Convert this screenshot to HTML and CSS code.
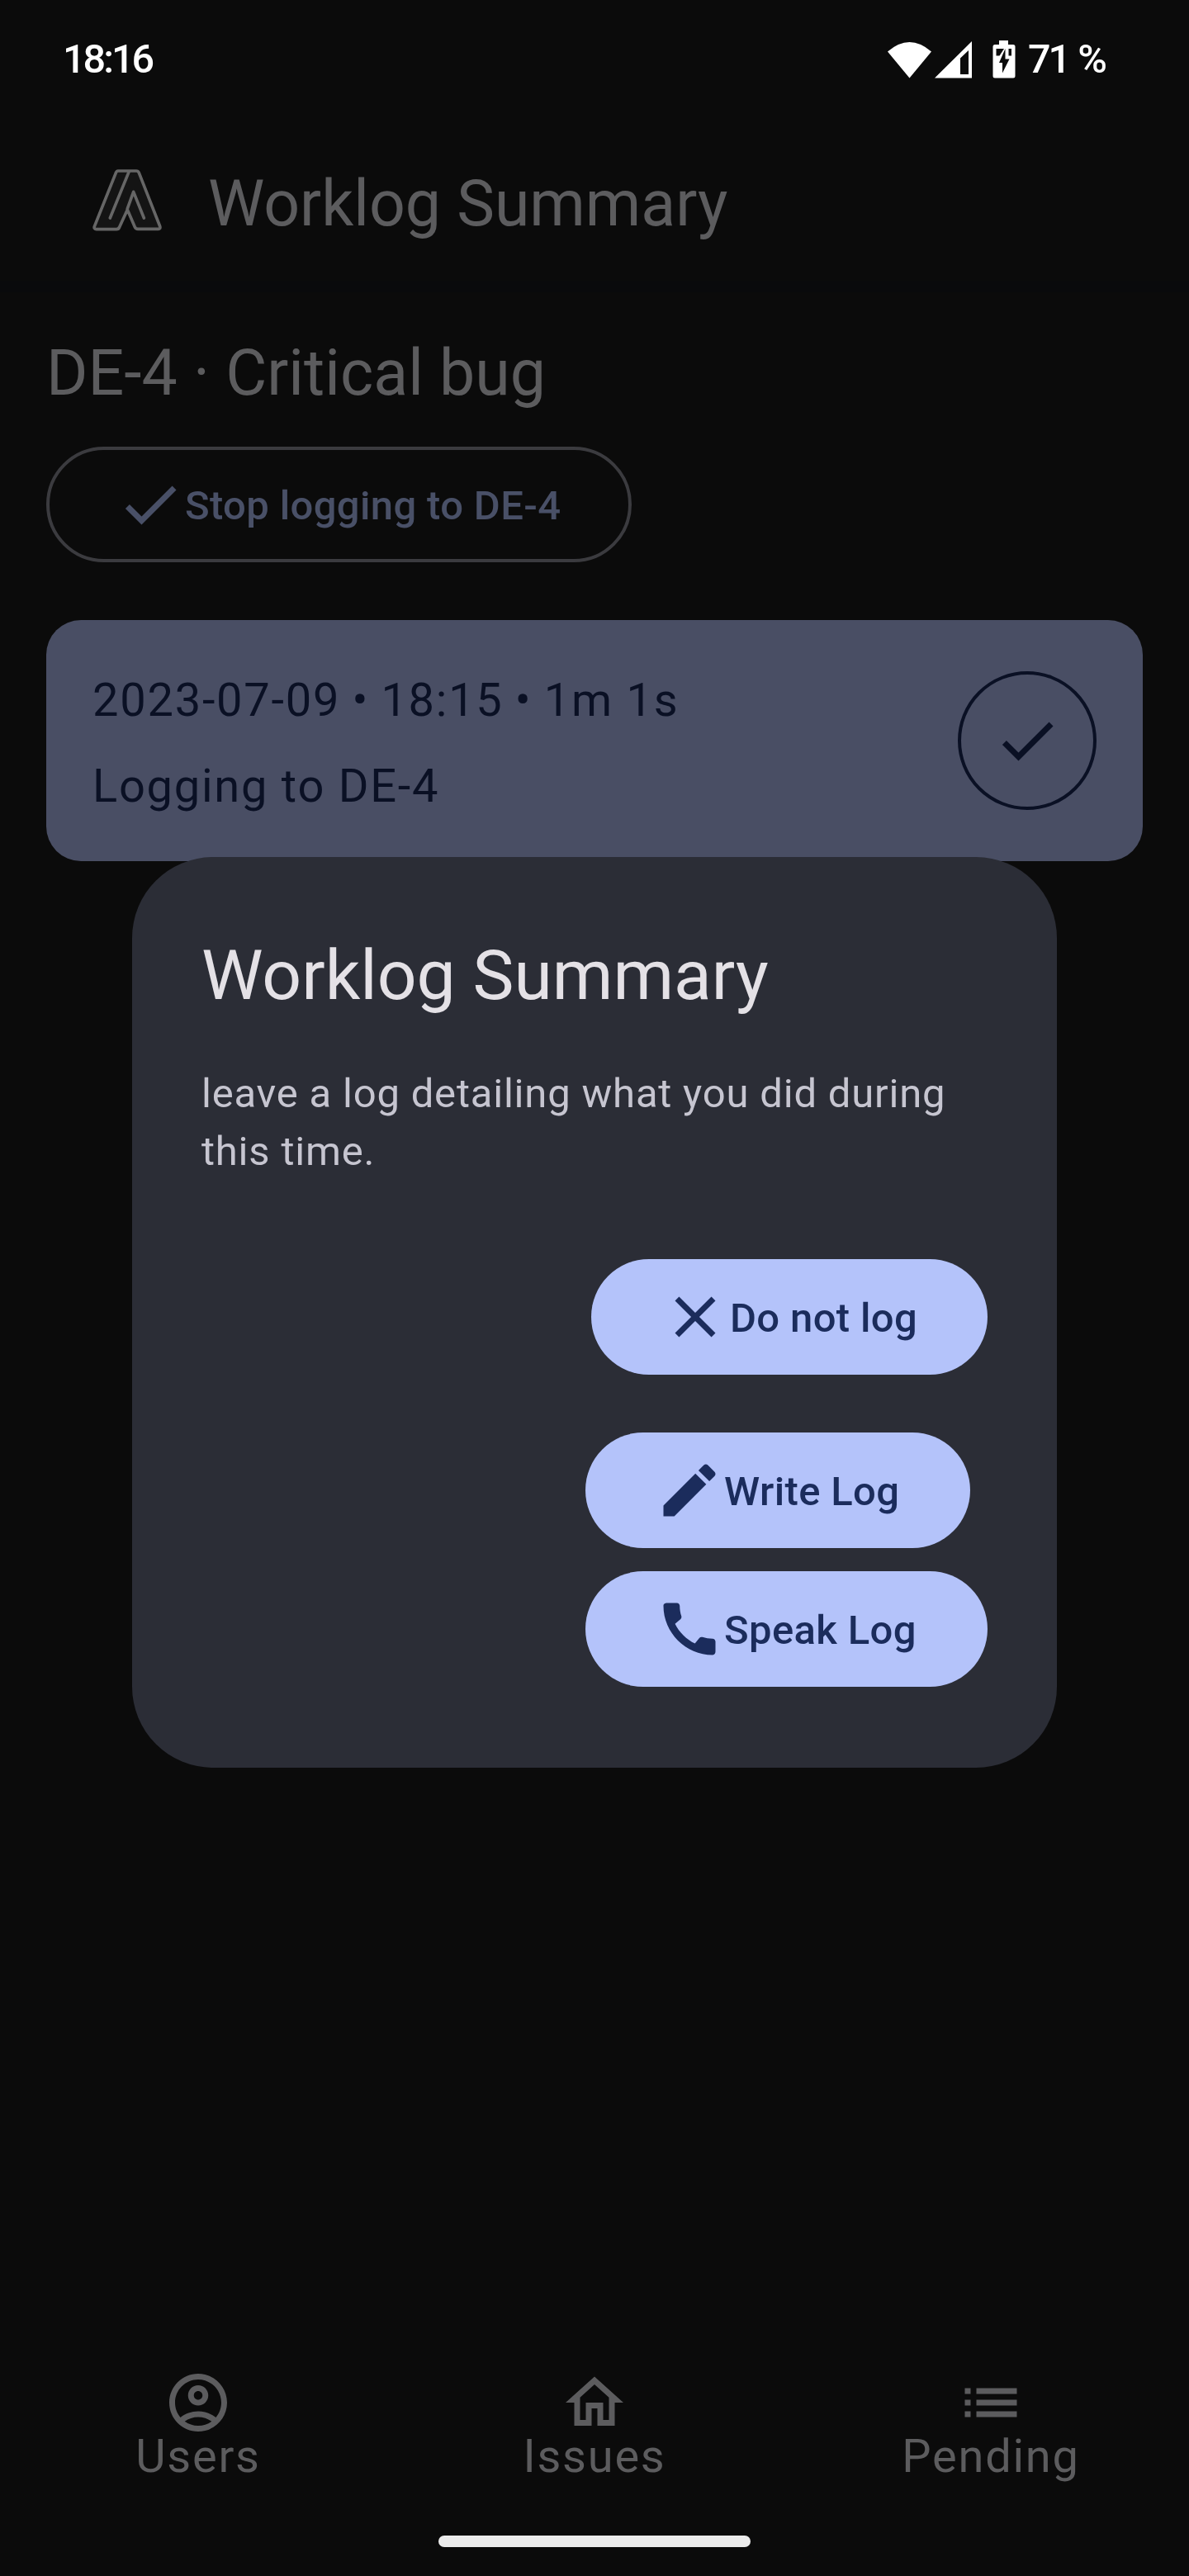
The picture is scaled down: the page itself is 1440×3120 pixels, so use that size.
FILE: index.html
```html
<!DOCTYPE html>
<html lang="en">
<head>
<meta charset="utf-8">
<title>Worklog Summary</title>
<link rel="stylesheet" href="styles.css">
</head>
<body>
<div class="screen">
  <div class="status-bar">
    <span class="clock">18:16</span>
    <div class="status-right">
      <svg class="status-icons" viewBox="0 0 156 46" fill="#fff">
        <path d="M0 13.5Q26.500 -9.500 53 13.500L26.500 45.500Z"/>
        <path fill-rule="evenodd" d="M57 45.500L102 1V45.500ZM88 21.500V41H98V12Z"/>
        <path fill-rule="evenodd" d="M135 0h11v5h6a2.500 2.500 0 0 1 2.500 2.500v35.500a2.500 2.500 0 0 1-2.500 2.500h-22a2.500 2.500 0 0 1-2.500-2.500v-35.500a2.500 2.500 0 0 1 2.500-2.500h5zM131.500 10v8.500h4l5.500-8.500zM146.500 10v8.500h3.500v-8.500zM142.500 10l-7.500 17h4v12.500l8.500-17h-5z"/>
      </svg>
      <span class="battery">71<span class="percent">%</span></span>
    </div>
  </div>
  <header class="app-bar">
    <svg class="logo" viewBox="60 68 264 234" fill="#141414" stroke="#666" stroke-width="11" stroke-linecap="round" stroke-linejoin="round">
      <path d="M159 80H196Q201 80 204 80H225Q232 80 235 87L311 281Q314 291 305 291H231Q223 291 220 284L193 221L164 284Q161 292 153 292H81Q70 291 73 282L151 87Q154 80 159 80Z"/>
      <path fill="none" d="M198 84L130 251M193 217L215 156L253 251"/>
    </svg>
    <h1 class="title">Worklog Summary</h1>
  </header>
  <div class="band"></div>
  <main class="content">
    <h2 class="issue">DE-4 · Critical bug</h2>
    <button class="stop">
      <svg class="icon" viewBox="0 0 24 24"><path d="M9 16.170L4.830 12l-1.420 1.410L9 19 21 7l-1.410-1.410z"/></svg>
      <span class="label">Stop logging to DE-4</span>
    </button>
    <section class="card">
      <div class="card-text">
        <p class="line">2023-07-09 <span class="dot">•</span> 18:15 <span class="dot">•</span> 1m 1s</p>
        <p class="line">Logging to DE-4</p>
      </div>
      <button class="done">
        <svg class="icon" viewBox="0 0 24 24"><path d="M9 16.170L4.830 12l-1.420 1.410L9 19 21 7l-1.410-1.410z"/></svg>
      </button>
    </section>
  </main>
  <nav class="nav">
    <a class="nav-item">
      <svg class="icon" viewBox="0 0 24 24"><path d="M12 2C6.480 2 2 6.480 2 12s4.480 10 10 10 10-4.480 10-10S17.520 2 12 2zM7.350 18.500C8.660 17.560 10.260 17 12 17s3.340.560 4.650 1.500c-1.310.940-2.910 1.500-4.650 1.500s-3.340-.560-4.650-1.500zm10.790-1.380C16.450 15.800 14.320 15 12 15s-4.450.800-6.140 2.120C4.700 15.730 4 13.950 4 12c0-4.420 3.580-8 8-8s8 3.580 8 8c0 1.950-.700 3.730-1.860 5.120zM12 6c-1.930 0-3.500 1.570-3.500 3.500S10.070 13 12 13s3.500-1.570 3.500-3.500S13.930 6 12 6zm0 5c-.830 0-1.500-.670-1.500-1.500S11.170 8 12 8s1.500.670 1.500 1.500S12.830 11 12 11z"/></svg>
      <span>Users</span>
    </a>
    <a class="nav-item">
      <svg class="icon" viewBox="0 0 24 24"><path d="M12 5.690l5 4.500V18h-2v-6H9v6H7v-7.810l5-4.500M12 3L2 12h3v8h6v-6h2v6h6v-8h3L12 3z"/></svg>
      <span>Issues</span>
    </a>
    <a class="nav-item">
      <svg class="icon" viewBox="0 0 24 24"><path d="M3 13h2v-2H3v2zm0 4h2v-2H3v2zm0-8h2V7H3v2zm4 4h14v-2H7v2zm0 4h14v-2H7v2zM7 7v2h14V7H7z"/></svg>
      <span>Pending</span>
    </a>
  </nav>
  <div class="home-handle"></div>

  <div class="dialog" role="dialog">
    <h2 class="dialog-title">Worklog Summary</h2>
    <p class="dialog-text">leave a log detailing what you did during this time.</p>
    <div class="actions">
      <button class="filled skip">
        <svg class="icon" viewBox="0 0 24 24"><path d="M19 6.410L17.590 5 12 10.590 6.410 5 5 6.410 10.590 12 5 17.590 6.410 19 12 13.410 17.590 19 19 17.590 13.410 12z"/></svg>
        <span class="label">Do not log</span>
      </button>
      <button class="filled write">
        <svg class="icon" viewBox="0 0 24 24"><path d="M3 17.250V21h3.750L17.810 9.940l-3.750-3.750L3 17.250zM20.710 7.040c.390-.390.390-1.020 0-1.410l-2.340-2.340c-.390-.390-1.020-.390-1.410 0l-1.830 1.830 3.750 3.750 1.830-1.830z"/></svg>
        <span class="label">Write Log</span>
      </button>
      <button class="filled speak">
        <svg class="icon" viewBox="0 0 24 24"><path d="M20.010 15.380c-1.230 0-2.420-.200-3.530-.560-.350-.120-.740-.030-1.010.240l-1.570 1.970c-2.830-1.350-5.480-3.900-6.890-6.830l1.950-1.660c.270-.280.350-.670.240-1.020-.370-1.110-.560-2.300-.560-3.530 0-.540-.450-.990-.990-.990H4.190C3.650 3 3 3.240 3 3.990 3 13.280 10.730 21 20.010 21c.710 0 .990-.630.990-1.180v-3.450c0-.540-.450-.990-.990-.990z"/></svg>
        <span class="label">Speak Log</span>
      </button>
    </div>
  </div>
</div>
</body>
</html>
```
FILE: styles.css
```css
* { box-sizing: border-box; }

body {
  margin: 0;
  background: #0b0b0b;
  color: #5c5c5e;
  font-family: Roboto, "Liberation Sans", sans-serif;
}

h1, h2, p { margin: 0; font-weight: 400; }

button {
  margin: 0;
  padding: 0;
  border: 0;
  background: none;
  color: inherit;
  font: inherit;
}

.screen {
  position: relative;
  display: flex;
  flex-direction: column;
  width: 1440px;
  height: 3120px;
  overflow: hidden;
}

.icon {
  display: block;
  flex: none;
  width: 84px;
  height: 84px;
  fill: currentColor;
}

.status-bar {
  display: flex;
  justify-content: space-between;
  height: 144px;
  padding: 42px 98px 0 76px;
  color: #fff;
  font-size: 48.5px;
  font-weight: 500;
  line-height: 60px;
}

.clock { letter-spacing: -3px; }

.status-right {
  display: flex;
  align-items: flex-start;
  gap: 14px;
}

.status-icons {
  width: 156px;
  height: 46px;
  margin-top: 7px;
}

.battery {
  display: flex;
  gap: 11px;
  width: 97px;
  letter-spacing: -3px;
}

.app-bar {
  display: flex;
  align-items: flex-start;
  height: 196px;
  padding: 54px 0 0 110px;
}

.logo {
  width: 88px;
  height: 78px;
  margin: 5px 54px 0 0;
}

.title, .issue { font-size: 77px; line-height: 98px; }

.band { height: 14px; background: #090a0c; }

.content {
  display: flex;
  flex-direction: column;
  align-items: flex-start;
  padding: 49px 56px 0;
}

.stop {
  display: flex;
  align-items: center;
  width: 709px;
  height: 140px;
  margin-top: 40px;
  padding-left: 80px;
  border: 4px solid #3b3b3f;
  border-radius: 70px;
  color: #495067;
}

.label {
  padding-top: 4px;
  font-size: 49px;
  font-weight: 500;
  line-height: 70px;
  letter-spacing: 0.35px;
  white-space: nowrap;
}

.card {
  display: flex;
  justify-content: space-between;
  align-self: stretch;
  align-items: center;
  height: 292px;
  margin-top: 70px;
  padding: 0 56px;
  border-radius: 42px;
  background: #494e64;
  color: #0a1024;
}

.card-text {
  display: flex;
  flex-direction: column;
  gap: 20px;
  padding-top: 6px;
}

.line {
  font-size: 56px;
  line-height: 84px;
  letter-spacing: 1.75px;
}

.dot { margin: 0 -1.4px; }

.done {
  display: flex;
  align-items: center;
  justify-content: center;
  width: 168px;
  height: 168px;
  border: 4px solid #0a1024;
  border-radius: 50%;
}

.nav {
  display: flex;
  margin-top: auto;
}

.nav-item {
  display: flex;
  flex: 1;
  flex-direction: column;
  align-items: center;
  font-size: 56px;
  line-height: 46px;
  letter-spacing: 1.75px;
}

.home-handle {
  width: 378px;
  height: 14px;
  margin: 73px auto 35px;
  border-radius: 7px;
  background: #ececec;
}

.dialog {
  position: absolute;
  top: 1038px;
  left: 160px;
  display: flex;
  flex-direction: column;
  width: 1120px;
  height: 1103px;
  padding: 88px 84px 98px;
  border-radius: 98px;
  background: #2b2d36;
}

.dialog-title {
  color: #e4e1e6;
  font-size: 84px;
  line-height: 112px;
}

.dialog-text {
  margin-top: 52px;
  color: #c6c5d0;
  font-size: 49px;
  line-height: 70px;
  letter-spacing: 0.8px;
}

.actions {
  display: flex;
  flex-direction: column;
  align-self: flex-end;
  align-items: flex-start;
  width: 487px;
  margin-top: 95px;
}

.filled {
  display: flex;
  align-items: center;
  height: 140px;
  padding-left: 84px;
  border-radius: 70px;
  background: #b4c3fa;
  color: #1b2c5c;
}

.skip { align-self: flex-end; width: 480px; margin-bottom: 70px; }
.write { width: 466px; margin-bottom: 28px; }
.speak { width: 487px; }
```
